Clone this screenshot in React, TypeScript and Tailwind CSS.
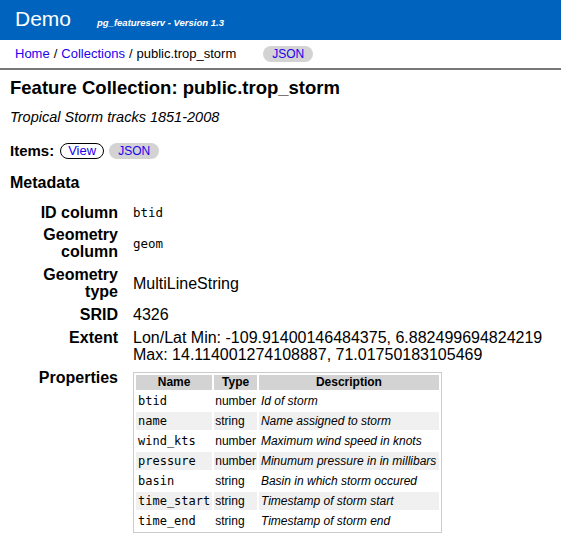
const props = [
  { name: "btid", type: "number", desc: "Id of storm" },
  { name: "name", type: "string", desc: "Name assigned to storm" },
  { name: "wind_kts", type: "number", desc: "Maximum wind speed in knots" },
  { name: "pressure", type: "number", desc: "Minumum pressure in in millibars" },
  { name: "basin", type: "string", desc: "Basin in which storm occured" },
  { name: "time_start", type: "string", desc: "Timestamp of storm start" },
  { name: "time_end", type: "string", desc: "Timestamp of storm end" },
];

const mono = "font-['DejaVu_Sans_Mono',monospace]";

const App = () => {
  return (
    <div className="min-h-[553px] bg-white text-black font-['Liberation_Sans',Arial,sans-serif]">
      {/* Header */}
      <header className="h-10 bg-[#0063be] flex items-center px-[15px] pb-[2px]">
        <div className="flex items-baseline">
          <span className="text-white text-[21px] leading-none">Demo</span>
          <span className="text-white text-[9.5px] font-bold italic ml-[26px]">
            pg_featureserv - Version 1.3
          </span>
        </div>
      </header>

      {/* Breadcrumb */}
      <div className="h-[30px] flex items-center px-[15px] border-b-2 border-[#777] text-[13px]">
        <a href="#" className="text-[#2200ee]">Home</a>
        <span className="mx-[4px]">/</span>
        <a href="#" className="text-[#2200ee]">Collections</a>
        <span className="mx-[4px]">/</span>
        <span>public.trop_storm</span>
        <span className="ml-[27px] bg-[#d3d3d3] text-[#2200ee] text-[12px] rounded-full px-[9px] h-[16px] flex items-center">
          JSON
        </span>
      </div>

      <div className="px-[10px]">
        <h1 className="text-[18.5px] leading-[22px] font-bold mt-[7px]">
          Feature Collection: public.trop_storm
        </h1>
        <p className="italic text-[14.5px] leading-[18px] mt-[9px]">Tropical Storm tracks 1851-2008</p>

        <div className="flex items-center h-[18px] mt-[16px]">
          <span className="font-bold text-[15px]">Items:</span>
          <a href="#" className="ml-[6px] border border-black rounded-full px-[7px] h-[16px] flex items-center text-[13px] text-[#2200ee]">
            View
          </a>
          <a href="#" className="ml-[5px] bg-[#d3d3d3] rounded-full px-[9px] h-[16px] flex items-center text-[12px] text-[#2200ee]">
            JSON
          </a>
        </div>

        <h2 className="font-bold text-[16px] leading-[18px] mt-[14px]">Metadata</h2>

        <div className="grid grid-cols-[80px_auto] gap-x-[15px] items-center ml-[28px] mt-[10px] text-[16px] leading-[17px]">
          <div className="font-bold text-right py-[2px]">ID column</div>
          <div className={`${mono} text-[12.5px] py-[2px]`}>btid</div>

          <div className="font-bold text-right py-[3px]">Geometry column</div>
          <div className={`${mono} text-[12.5px] py-[3px]`}>geom</div>

          <div className="font-bold text-right py-[3px]">Geometry type</div>
          <div className="py-[3px]">MultiLineString</div>

          <div className="font-bold text-right py-[3px]">SRID</div>
          <div className="py-[3px]">4326</div>

          <div className="font-bold text-right py-[3px] self-start">Extent</div>
          <div className="py-[3px]">
            Lon/Lat Min: -109.91400146484375, 6.882499694824219
            <br />
            Max: 14.114001274108887, 71.01750183105469
          </div>

          <div className="font-bold text-right py-[3px] self-start">Properties</div>
          <div className="pt-[6px] pb-[3px] self-start">
            <table className="border border-[#ccc] border-separate border-spacing-[2px] text-[12px] leading-[15px]">
              <thead>
                <tr>
                  <th className="bg-[#d3d3d3] w-[74px] font-bold">Name</th>
                  <th className="bg-[#d3d3d3] w-[42px] font-bold">Type</th>
                  <th className="bg-[#d3d3d3] w-[180px] font-bold">Description</th>
                </tr>
              </thead>
              <tbody>
                {props.map((p, i) => (
                  <tr key={p.name} className={i % 2 === 1 ? "bg-[#f0f0f0]" : ""}>
                    <td className={`${mono} px-[2px] h-[18px]`}>{p.name}</td>
                    <td className="px-[1px]">{p.type}</td>
                    <td className="italic px-[2px]">{p.desc}</td>
                  </tr>
                ))}
              </tbody>
            </table>
          </div>
        </div>
      </div>
    </div>
  );
};

export default App;
